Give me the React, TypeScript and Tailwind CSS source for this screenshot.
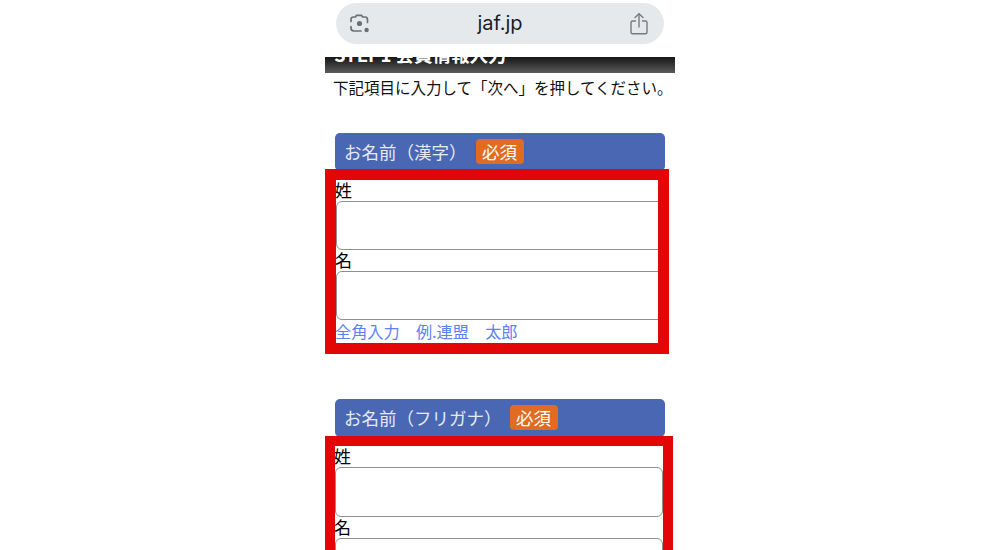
const jp = { fontFamily: '"Noto Sans CJK JP", "Liberation Sans", sans-serif' };

function LensIcon() {
  return (
    <svg width="22" height="22" viewBox="0 0 22 22" fill="none" stroke="#6b7075" strokeWidth="1.7" strokeLinecap="round">
      <path d="M2 8.500V6.500a2.500 2.500 0 0 1 2.500-2.500H6.500l1-1.600h5l1 1.600h2.500a2.500 2.500 0 0 1 2.500 2.500v3" />
      <path d="M2 13.500v1.500a3 3 0 0 0 3 3h7" />
      <circle cx="10.500" cy="10.500" r="2.600" fill="#6b7075" stroke="none" />
      <circle cx="17.600" cy="17" r="2.200" fill="#6b7075" stroke="none" />
    </svg>
  );
}

function ShareIcon() {
  return (
    <svg width="20" height="24" viewBox="0 0 20 24" fill="none" stroke="#777b80" strokeWidth="1.4" strokeLinecap="round" strokeLinejoin="round">
      <path d="M10 15V2" />
      <path d="M6 5.500 10 1.700l4 3.800" />
      <path d="M6.500 9H3.500A1.500 1.500 0 0 0 2 10.500v9.800a1.500 1.500 0 0 0 1.500 1.500h13a1.500 1.500 0 0 0 1.500-1.500v-9.800a1.500 1.500 0 0 0-1.500-1.500h-3" />
    </svg>
  );
}

function Heading({ title, gap }: { title: string; gap: string }) {
  return (
    <div className="mx-[10px] flex h-[38px] w-[330px] items-center rounded-[5px] bg-[#4a67b3] pb-[1px] pl-[9px] text-[17.500px] leading-none text-[#e6eaf5]">
      <span>{title}</span>
      <span className={`${gap} flex h-[25px] w-[48px] items-center justify-center rounded-[4px] bg-[#e06b23] text-white`}>必須</span>
    </div>
  );
}

function Field({ label, size }: { label: string; size: string }) {
  return (
    <div>
      <div className="ml-[-1px] h-[21px] text-[17px] leading-[19px] text-black">{label}</div>
      <div className={`${size} rounded-[6px] border border-[#8f8f8f] bg-white`} />
    </div>
  );
}

export default function App() {
  return (
    <div className="flex h-[550px] w-[1000px] justify-center overflow-hidden bg-white" style={jp}>
      <div className="w-[350px]">
        <div className="mx-[11px] mt-[3px] flex h-[41px] w-[328px] items-center justify-between rounded-full bg-[#e6e9ec] pl-[13px] pr-[15px]">
          <LensIcon />
          <span className="mt-[-2px] text-[20px] leading-none text-[#1c1c1e]" style={{ fontFamily: '"Inter", "Liberation Sans", sans-serif' }}>jaf.jp</span>
          <ShareIcon />
        </div>

        <div className="mt-[13px] h-[16px] overflow-hidden whitespace-nowrap bg-gradient-to-b from-[#171717] to-[#5c5c5c] pl-[9px]">
          <div className="mt-[-13px] text-[18.500px] font-bold leading-[21px] text-white">STEP1 会員情報入力</div>
        </div>

        <p className="mt-[4px] whitespace-nowrap pl-[8px] text-[15.500px] leading-[21px] text-[#111]">下記項目に入力して「次へ」を押してください。</p>

        <div className="mt-[35px]">
          <Heading title="お名前（漢字）" gap="ml-[9px]" />
        </div>
        <div className="relative mt-[-2px] h-[185px] w-[344px] overflow-hidden border-[11px] border-[#e20606] bg-white">
          <Field label="姓" size="h-[49px] w-[335px]" />
          <Field label="名" size="h-[49px] w-[335px]" />
          <div className="ml-[-1px] h-[22px] whitespace-nowrap text-[16.200px] leading-[22px] text-[#5b82f5]">全角入力　例.連盟　太郎</div>
        </div>

        <div className="mt-[45px]">
          <Heading title="お名前（フリガナ）" gap="ml-[8px]" />
        </div>
        <div className="relative mt-[-1px] h-[200px] w-[348px] border-[10px] border-[#e20606] bg-white">
          <Field label="姓" size="h-[50px] w-[328px]" />
          <Field label="名" size="h-[50px] w-[328px]" />
        </div>
      </div>
    </div>
  );
}
